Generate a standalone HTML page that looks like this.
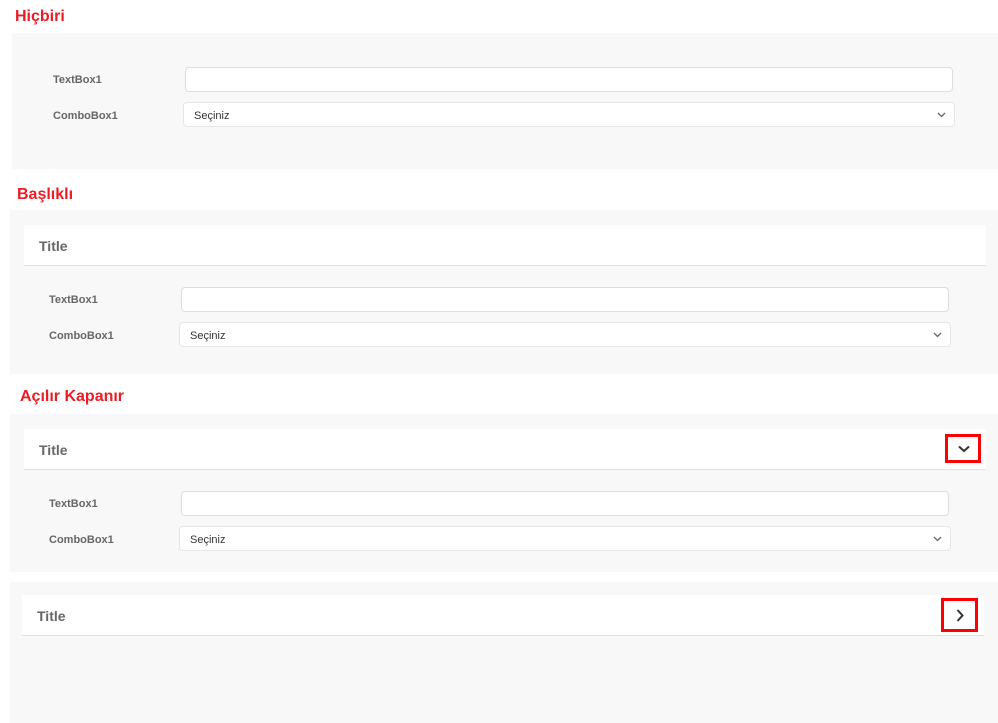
<!DOCTYPE html>
<html><head><meta charset="utf-8"><style>
body{margin:0;width:998px;height:723px;background:#fff;position:relative;overflow:hidden;font-family:"Liberation Sans",sans-serif}
div,span{position:absolute;box-sizing:border-box}
.h{color:#ec1c24;font-weight:bold;font-size:16px}
.g{background:#f8f8f8}
.hd{background:#fff;border-bottom:1px solid #e0e0e0}
.t{color:#666;font-weight:bold;font-size:14px}
.l{color:#666;font-weight:bold;font-size:11px}
.in{background:#fff;border:1px solid #ddd;border-radius:4px;height:25px}
.cb{background:#fff;border:1px solid #e6e6e6;border-radius:4px;height:25px;font-size:11px;color:#333;padding:7px 0 0 10px}
.cb svg{position:absolute;right:8px;top:9px}
.rb{border:3px solid #f00}
</style></head><body>
<span class="h" style="left:15px;top:8px">Hiçbiri</span>
<div class="g" style="left:12px;top:33px;width:986px;height:136px"></div>
<span class="l" style="left:53px;top:74px">TextBox1</span>
<div class="in" style="left:185px;top:67px;width:768px"></div>
<span class="l" style="left:53px;top:110px">ComboBox1</span>
<div class="cb" style="left:183px;top:102px;width:772px">Seçiniz<svg width="9" height="6" viewBox="0 0 9 6"><path d="M1 1l3.5 3.5L8 1" stroke="#666" stroke-width="1.3" fill="none"/></svg></div>

<span class="h" style="left:17px;top:186px">Başlıklı</span>
<div class="g" style="left:10px;top:210px;width:988px;height:164px"></div>
<div class="hd" style="left:24px;top:225px;width:962px;height:41px"></div>
<span class="t" style="left:39px;top:238px">Title</span>
<span class="l" style="left:49px;top:294px">TextBox1</span>
<div class="in" style="left:181px;top:287px;width:768px"></div>
<span class="l" style="left:49px;top:330px">ComboBox1</span>
<div class="cb" style="left:179px;top:322px;width:772px">Seçiniz<svg width="9" height="6" viewBox="0 0 9 6"><path d="M1 1l3.5 3.5L8 1" stroke="#666" stroke-width="1.3" fill="none"/></svg></div>

<span class="h" style="left:20px;top:388px">Açılır Kapanır</span>
<div class="g" style="left:10px;top:414px;width:988px;height:158px"></div>
<div class="hd" style="left:24px;top:429px;width:962px;height:41px"></div>
<span class="t" style="left:39px;top:442px">Title</span>
<div class="rb" style="left:945px;top:434px;width:36px;height:29px"><svg style="position:absolute;left:10px;top:8px" width="12" height="8" viewBox="0 0 12 8"><path d="M1 1.5l5 4.5 5-4.5" stroke="#333" stroke-width="2" fill="none"/></svg></div>
<span class="l" style="left:49px;top:498px">TextBox1</span>
<div class="in" style="left:181px;top:491px;width:768px"></div>
<span class="l" style="left:49px;top:534px">ComboBox1</span>
<div class="cb" style="left:179px;top:526px;width:772px">Seçiniz<svg width="9" height="6" viewBox="0 0 9 6"><path d="M1 1l3.5 3.5L8 1" stroke="#666" stroke-width="1.3" fill="none"/></svg></div>

<div class="g" style="left:10px;top:582px;width:988px;height:141px"></div>
<div class="hd" style="left:22px;top:595px;width:962px;height:41px"></div>
<span class="t" style="left:37px;top:608px">Title</span>
<div class="rb" style="left:941px;top:598px;width:37px;height:34px"><svg style="position:absolute;left:12px;top:8px" width="8" height="13" viewBox="0 0 8 13"><path d="M1.5 1l5 5.5-5 5.5" stroke="#333" stroke-width="2" fill="none"/></svg></div>
</body></html>
